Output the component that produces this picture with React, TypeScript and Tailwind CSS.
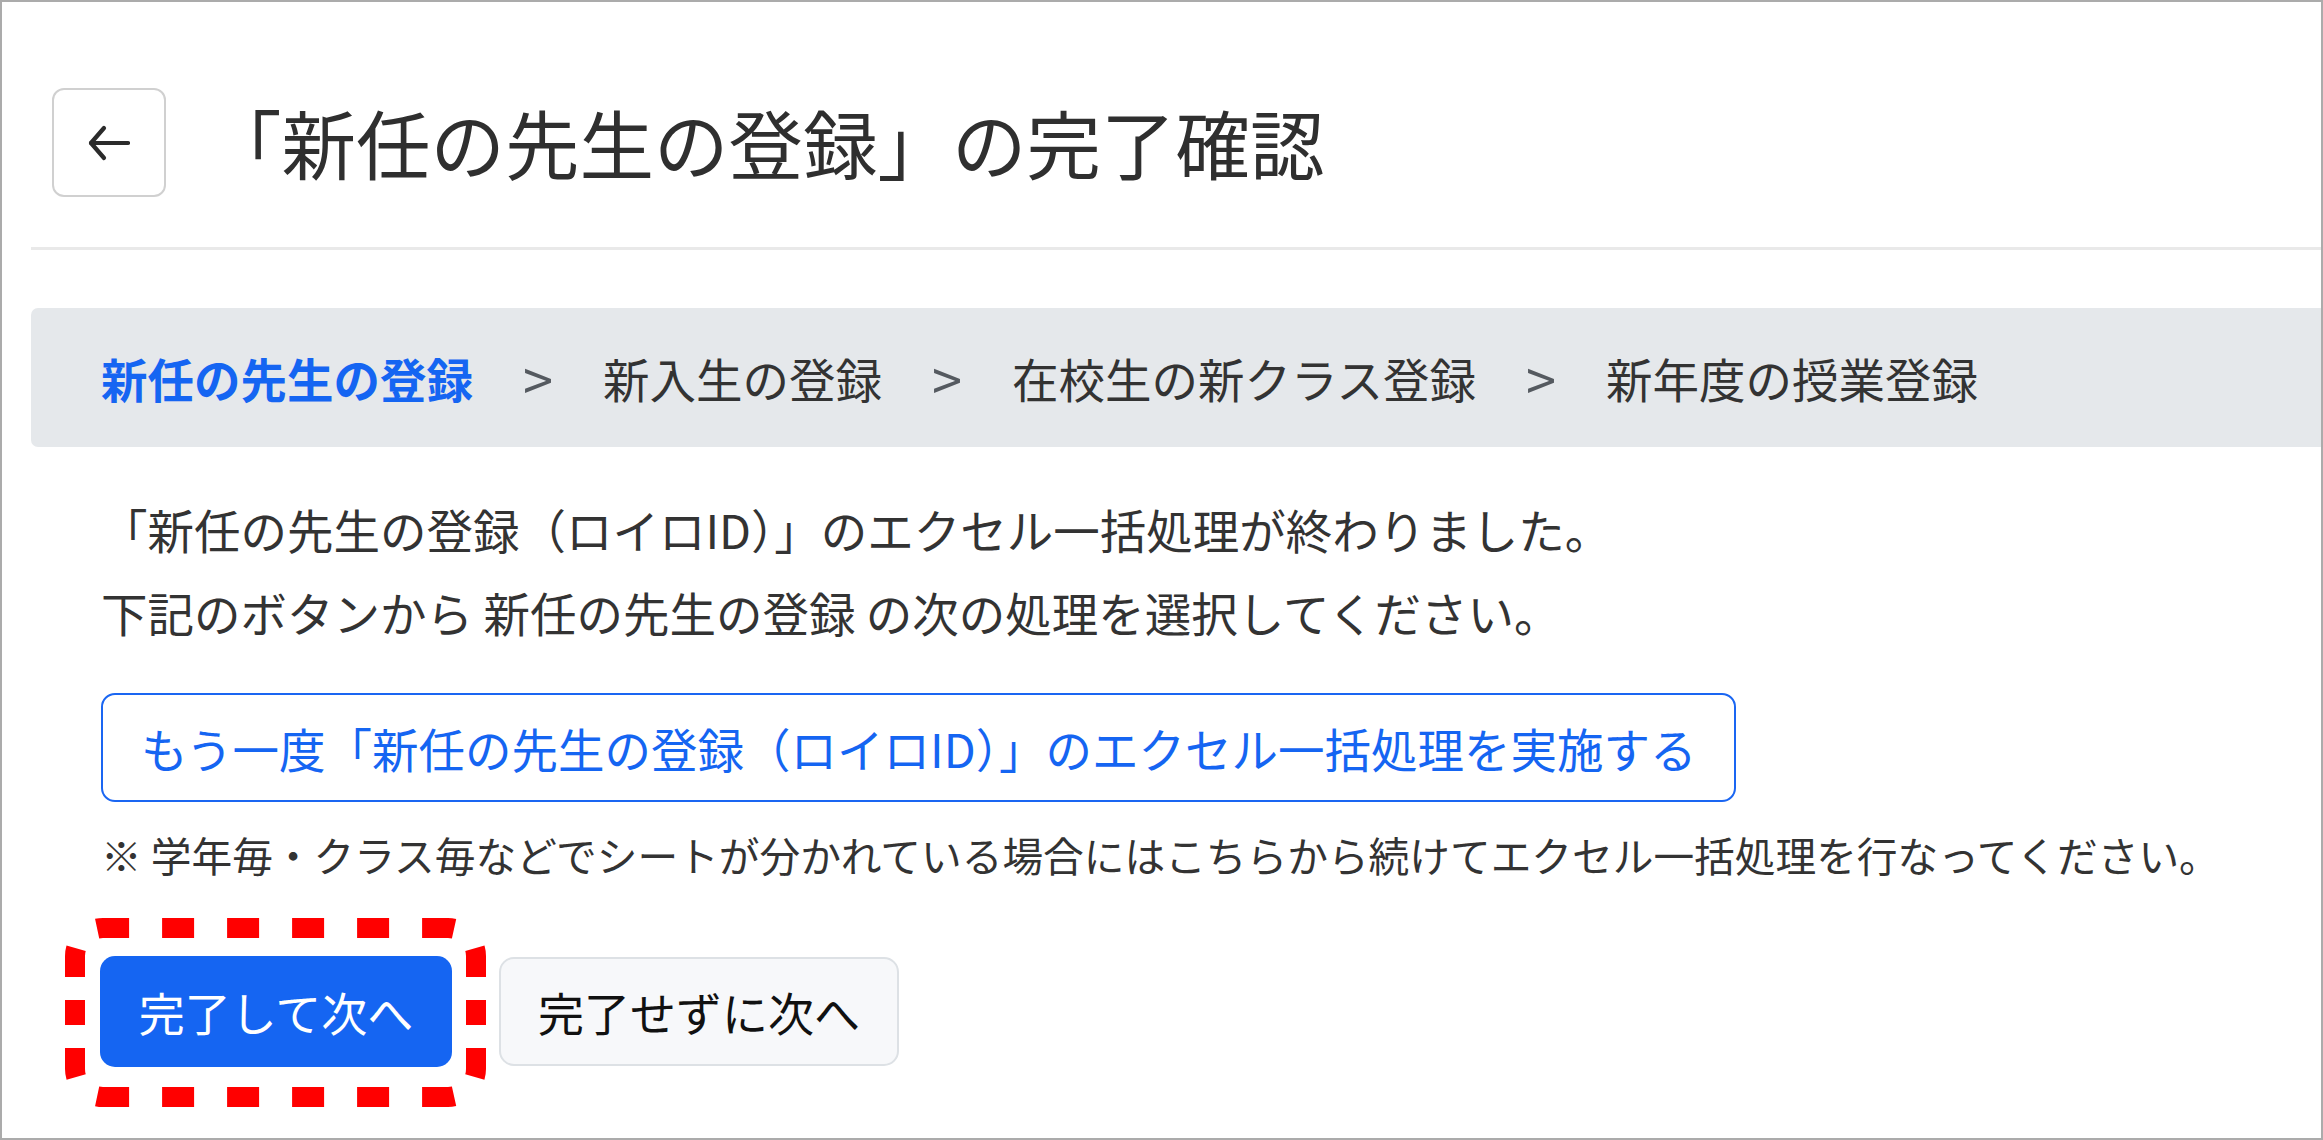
import React from "react";

const crumbs = ["新任の先生の登録", "新入生の登録", "在校生の新クラス登録", "新年度の授業登録"];

function BackArrow() {
  return (
    <svg width="42" height="36" viewBox="0 0 42 36" fill="none" stroke="#2b2b2b" strokeWidth="4.2" strokeLinecap="round" strokeLinejoin="round">
      <path d="M40 18H3" />
      <path d="M16 3 3 18l13 15" />
    </svg>
  );
}

// red dotted annotation around the primary button
function DashedFrame() {
  return (
    <svg className="absolute left-[-35px] top-[-38px] pointer-events-none" width="421" height="189" viewBox="0 0 421 189" fill="none" stroke="#ff0000" strokeWidth="20">
      <path d="M18.2 18.2A28 28 0 0 1 38 10H383a28 28 0 0 1 19.8 8.2" strokeDasharray="32 33" strokeDashoffset="-16" />
      <path d="M18.2 170.8A28 28 0 0 0 38 179H383a28 28 0 0 0 19.8-8.2" strokeDasharray="32 33" strokeDashoffset="-16" />
      <path d="M18.2 18.2A28 28 0 0 0 10 38V151a28 28 0 0 0 8.2 19.8" strokeDasharray="29 23 25 23 29 200" strokeDashoffset="-14" />
      <path d="M402.8 18.2A28 28 0 0 1 411 38V151a28 28 0 0 1-8.2 19.8" strokeDasharray="29 23 25 23 29 200" strokeDashoffset="-14" />
    </svg>
  );
}

export default function App() {
  return (
    <div className="w-[2323px] h-[1140px] border-2 border-[#ababab] bg-white overflow-hidden text-[#333] font-['Noto_Sans_CJK_JP','Noto_Sans',sans-serif]">
      <div className="pl-[29px] pt-[86px]">
        <header className="flex items-center pl-[21px] pb-[50px] border-b-[3px] border-[#e9e9e9]">
          <button className="w-[114px] h-[109px] rounded-[12px] border-2 border-[#d0d0d0] bg-white flex items-center justify-center">
            <BackArrow />
          </button>
          <h1 className="ml-[41px] text-[74.5px] leading-none font-normal text-[#2f2f2f]">「新任の先生の登録」の完了確認</h1>
        </header>

        <nav className="mt-[58px] h-[139px] bg-[#e5e8eb] rounded-l-[7px] flex items-center pl-[70px] text-[46.5px]">
          {crumbs.map((c, i) => (
            <React.Fragment key={c}>
              {i > 0 && <span className="w-[130px] text-center text-[54px] leading-none text-[#555a60]">&gt;</span>}
              <span className={i === 0 ? "font-bold text-[#1565f2]" : "text-[#333]"}>{c}</span>
            </React.Fragment>
          ))}
        </nav>

        <div className="pl-[70px]">
          <div className="mt-[40px] text-[46.5px] leading-[83px]">
            <p>「新任の先生の登録（ロイロID）」のエクセル一括処理が終わりました。</p>
            <p>下記のボタンから 新任の先生の登録 の次の処理を選択してください。</p>
          </div>

          <button className="mt-[40px] h-[109px] px-[38px] border-2 border-[#1a66f2] rounded-[14px] bg-white text-[#1565f2] text-[46.5px] flex items-center">
            もう一度「新任の先生の登録（ロイロID）」のエクセル一括処理を実施する
          </button>

          <p className="mt-[23px] text-[40.7px] leading-[60px]">※ 学年毎・クラス毎などでシートが分かれている場合にはこちらから続けてエクセル一括処理を行なってください。</p>

          <div className="mt-[71px] flex items-center">
            <div className="relative -ml-[1px]">
              <button className="w-[352px] h-[111px] rounded-[15px] bg-[#1565f2] text-white text-[46px] flex items-center justify-center">
                完了して次へ
              </button>
              <DashedFrame />
            </div>
            <button className="ml-[47px] w-[400px] h-[109px] rounded-[15px] border-2 border-[#dde1e5] bg-[#f7f8fa] text-[#111] text-[46px] flex items-center justify-center">
              完了せずに次へ
            </button>
          </div>
        </div>
      </div>
    </div>
  );
}
